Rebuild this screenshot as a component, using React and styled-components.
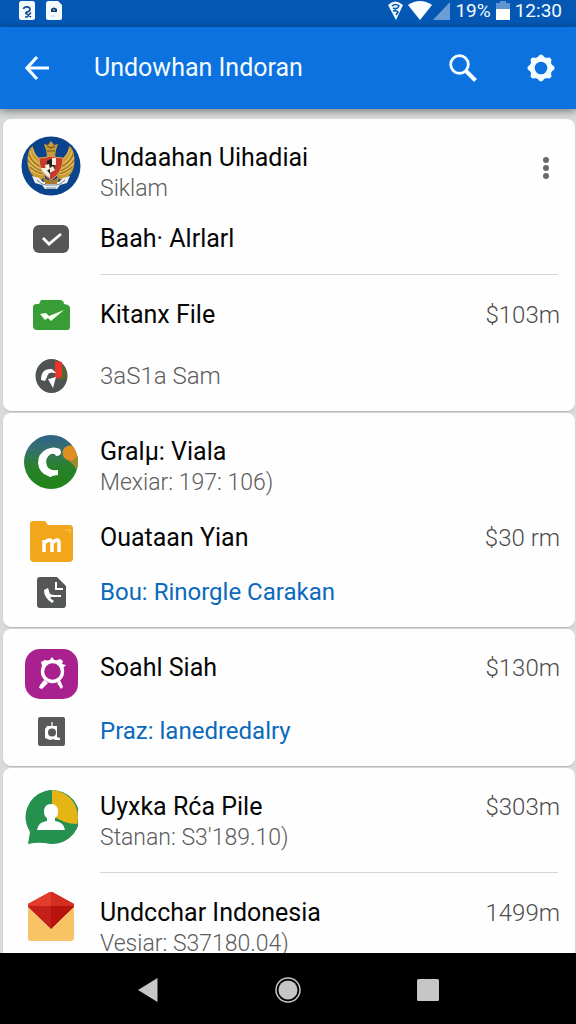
import React from "react";
import styled, { createGlobalStyle } from "styled-components";

const GlobalStyle = createGlobalStyle`
  * { box-sizing: border-box; }
  body {
    margin: 0;
    background: #d9dadb;
    font-family: Roboto, "Liberation Sans", sans-serif;
  }
  button { font: inherit; }
`;

const Screen = styled.div`
  display: flex;
  flex-direction: column;
  height: 100vh;
  overflow: hidden;
`;

const StatusBar = styled.div`
  flex: none;
  display: flex;
  align-items: flex-start;
  justify-content: space-between;
  height: 27px;
  padding: 1px 14px 0 19px;
  background: #0458b4;
  color: #f2fbff;
  font-size: 19px;
  line-height: 20px;
`;

const StatusGroup = styled.div`
  display: flex;
  align-items: flex-start;
  gap: ${(p) => p.$gap}px;
`;

const Toolbar = styled.header`
  flex: none;
  position: relative;
  display: flex;
  align-items: center;
  height: 82px;
  padding: 0 19px 0 21px;
  background: #0c72e0;
  color: #f4fcff;
  box-shadow: 0 2px 8px rgba(0, 0, 0, 0.45);
`;

const ToolbarTitle = styled.h1`
  flex: 1;
  margin: 0 0 0 41px;
  font-size: 25px;
  font-weight: 400;
  line-height: 32px;
  white-space: nowrap;
`;

const Actions = styled.div`
  display: flex;
  gap: 46px;
`;

const IconButton = styled.button`
  display: flex;
  align-items: center;
  justify-content: center;
  width: 32px;
  height: 32px;
  padding: 0;
  border: 0;
  background: none;
  color: inherit;
  cursor: pointer;
`;

const List = styled.main`
  flex: 1;
  min-height: 0;
  overflow-y: auto;
  scrollbar-width: none;
  display: flex;
  flex-direction: column;
  gap: 2px;
  padding: 10px 1px 0 3px;
`;

const Card = styled.section`
  flex: none;
  padding: 23px 15px 19px 17px;
  border-radius: 8px;
  background: #fefefe;
  box-shadow: 0 1px 1px rgba(0, 0, 0, 0.16);
`;

const Row = styled.div`
  display: flex;
  align-items: flex-start;
  margin-top: ${(p) => p.$gap || 0}px;
`;

const IconSlot = styled.div`
  flex: none;
  display: flex;
  align-items: center;
  justify-content: center;
  width: 62px;
  height: ${(p) => p.$height || 32}px;
  margin-right: 18px;
`;

const Copy = styled.div`
  flex: 1;
  min-width: 0;
  white-space: nowrap;
`;

const Title = styled.h2`
  margin: 0;
  color: #060606;
  font-size: 25px;
  font-weight: 400;
  line-height: 32px;
`;

const Detail = styled.p`
  margin: 0;
  color: #5c5c5c;
  font-size: ${(p) => (p.$large ? 24 : 23)}px;
  font-weight: 300;
  line-height: ${(p) => (p.$large ? 32 : 30)}px;
`;

const DetailLink = styled.a`
  display: block;
  color: #0a69bd;
  font-size: 24px;
  line-height: 32px;
  text-decoration: none;
`;

const Amount = styled.div`
  color: #4c4c4c;
  font-size: 24px;
  font-weight: 300;
  line-height: 32px;
  white-space: nowrap;
`;

const Menu = styled(IconButton)`
  margin: 10px -2px 0 0;
  color: #6a6a6a;
`;

const Divider = styled.hr`
  height: 1px;
  margin: 19px 2px 0 80px;
  border: 0;
  background: #d6d6d6;
`;

const NavBar = styled.nav`
  flex: none;
  display: grid;
  grid-template-columns: repeat(3, 1fr);
  place-items: center;
  height: 71px;
  padding: 2px 13.5% 0;
  background: #000;
  color: #c6c6c6;
`;

const Svg = ({ w, h, children }) => (
  <svg width={w} height={h} viewBox={`0 0 ${w} ${h}`} fill="none" aria-hidden="true">
    {children}
  </svg>
);

const SimIcon = () => (
  <Svg w={16} h={19}>
    <rect width="16" height="19" rx="2.5" fill="#f4fbff" />
    <path d="M4.500 8C5 5 11 5 11 8.500S6 10 7 12.500L12 16M12 11.500L8 16H6" stroke="#184f8c" strokeWidth="1.700" />
  </Svg>
);
const FileIcon = () => (
  <Svg w={16} h={19}>
    <path d="M2.500 0H12L16 4V17Q16 19 14 19H2Q0 19 0 17V3Q0 0 2.500 0Z" fill="#f4fbff" />
    <path d="M5 11V8Q8 5 11 8V11Z" fill="#123f78" />
    <path d="M7 9h2M5 15h4" stroke="#bcd4ee" />
  </Svg>
);
const LocationIcon = () => (
  <Svg w={15} h={19}>
    <path d="M0 4Q7 -3 15 4L8 19Z" fill="#f4fbff" />
    <path d="M4 5Q8 2 11 5Q9 9 5 7M5 10Q8 9 10 11L8 14" stroke="#0458b4" strokeWidth="1.600" />
  </Svg>
);
const WifiIcon = () => (
  <Svg w={24} h={19}><path d="M0 4Q12 -4 24 4L12 19Z" fill="#fbfeff" /></Svg>
);
const SignalIcon = () => (
  <Svg w={17} h={19}><path d="M17 1V19H0Z" fill="#6d9dd6" /></Svg>
);
const BatteryIcon = () => (
  <Svg w={14} h={19}>
    <path d="M4 0H10V2H14V9H0V2H4Z" fill="#5f94d0" />
    <path d="M0 8H14V19H0Z" fill="#fff" />
  </Svg>
);

const BackIcon = () => (
  <Svg w={26} h={26}>
    <path d="M13 2L3 13L13 24M3 13H25" stroke="currentColor" strokeWidth="3.200" />
  </Svg>
);
const SearchIcon = () => (
  <Svg w={28} h={28}>
    <circle cx="10.500" cy="10.500" r="8.800" stroke="currentColor" strokeWidth="2.800" />
    <path d="M17 17L26.500 26.500" stroke="currentColor" strokeWidth="4" />
  </Svg>
);
const GearIcon = () => (
  <Svg w={28} h={28}>
    <circle cx="14" cy="14" r="8.800" stroke="currentColor" strokeWidth="5" />
    {[0, 45, 90, 135, 180, 225, 270, 315].map((a) => (
      <path key={a} d="M10 4L12.400 0.900Q14 0 15.600 0.900L18 4Z" fill="currentColor" transform={`rotate(${a} 14 14)`} />
    ))}
  </Svg>
);
const DotsIcon = () => (
  <Svg w={8} h={24}>
    <circle cx="4" cy="4" r="3" fill="currentColor" />
    <circle cx="4" cy="12" r="3" fill="currentColor" />
    <circle cx="4" cy="20" r="3" fill="currentColor" />
  </Svg>
);

const Wing = () => (
  <>
    <path d="M19 44C9 41 5 31 7 19Q8 12 12 10Q12 17 16 21Q20 23 22 27L24 42Z" fill="#c99a35" />
    <path d="M9 15Q10 23 20 29M7 21Q10 28 20 33M7 27Q12 33 21 36M10 34Q15 38 22 39M12 13Q13 20 21 25" stroke="#e6bd58" strokeWidth="1.200" />
    <path d="M8 18Q10 26 20 31M7 24Q11 31 20 35M9 31Q14 36 21 38" stroke="#76602e" strokeWidth="0.800" />
  </>
);
const EmblemIcon = () => (
  <Svg w={60} h={60}>
    <circle cx="30" cy="30" r="29.500" fill="#0b438c" />
    <Wing />
    <g transform="matrix(-1 0 0 1 60 0)"><Wing /></g>
    <path d="M26 20L25 14L23 8L27 9L30 5L33 9L37 8L35 14L34 20L37 23H23Z" fill="#c79b38" />
    <path d="M26 10L30 12L34 10M26 15H34" stroke="#6d581f" strokeWidth="1.200" />
    <path d="M21 40Q30 49 39 40L36 49H24Z" fill="#ad7b27" />
    <path d="M18 22Q24 22 30 20Q36 22 42 22Q42 37 30 44Q18 37 18 22Z" fill="#c83b2c" stroke="#d6aa55" />
    <path d="M20 32H29V42Q22 38 20 32Z" fill="#f1eee2" />
    <path d="M26 25L30 23L33 25L34 33L29 38L25 33Z" fill="#241d1b" />
    <path d="M31 22H35V29H31ZM29 32L32 30L34 34L29 37ZM24 29L28 28L29 33L25 35Z" fill="#f8eee0" />
    <path d="M11 40L18 42L22 46L38 46L42 42L49 40L46 47L39 49L36 53H24L21 49L14 47Z" fill="#edf1ee" />
    <path d="M16 44L21 48L25 49H35L39 48L44 44M25 52H35" stroke="#6c8299" strokeWidth="1" />
    <path d="M24 42Q30 47 36 42L36 48H24Z" fill="#a9792b" />
  </Svg>
);
const CheckCardIcon = () => (
  <Svg w={36} h={28}>
    <rect width="36" height="28" rx="6" fill="#565656" />
    <path d="M10 13L16 19L28 9" stroke="#fff" strokeWidth="2.800" />
  </Svg>
);
const GreenFolderIcon = () => (
  <Svg w={37} h={30}>
    <path d="M8 0H28Q31 1 31 4L35 5Q37 6 37 8V27Q37 30 34 30H4Q0 30 0 26V7Q0 4 4 4H6Z" fill="#389d36" />
    <path d="M7 14L13 13L16 16L31 10L18 21L15 18L12 20Z" fill="#f5fff2" />
  </Svg>
);
const CompassIcon = () => (
  <Svg w={33} h={34}>
    <ellipse cx="16.500" cy="17" rx="16" ry="17" fill="#505354" />
    <path d="M28 6Q32 10 32 18L28 21H23Z" fill="#576432" />
    <path d="M20 2L27 3V18L20 20Z" fill="#ef3429" />
    <path d="M6 21Q6 9 17 10L21 14L14 14L10 22ZM13 20L21 18L18 29Z" fill="#fff" />
    <path d="M12 17L17 13L20 16L15 20" fill="#505354" />
  </Svg>
);
const CircleCIcon = () => (
  <Svg w={54} h={54}>
    <defs>
      <linearGradient id="hill" x1="0" y1="0" x2="0" y2="54" gradientUnits="userSpaceOnUse">
        <stop stopColor="#2c6488" /><stop offset="0.280" stopColor="#37706d" />
        <stop offset="0.550" stopColor="#2a8030" /><stop offset="1" stopColor="#208415" />
      </linearGradient>
      <clipPath id="disc"><circle cx="27" cy="27" r="27" /></clipPath>
    </defs>
    <g clipPath="url(#disc)">
      <rect width="54" height="54" fill="url(#hill)" />
      <path d="M43 24L54 20V36Q49 29 43 24Z" fill="#a08b2a" />
      <circle cx="46" cy="18" r="7.500" fill="#df8e20" />
    </g>
    <path d="M36 14Q30 11 23 14Q14 18 14 28Q15 38 24 41Q27 43 28 41L34 40V35Q25 36 23 31Q20 23 27 19Q31 18 32 21Q37 21 37 17Z" fill="#fff" />
  </Svg>
);
const YellowFolderIcon = () => (
  <Svg w={43} h={41}>
    <path d="M3 0H15L18 4H40Q43 4 43 8V37Q43 41 39 41H4Q0 41 0 37V3Q0 0 3 0Z" fill="#f1a61b" />
    <path d="M35 9H40V12" stroke="#f7bb45" strokeWidth="2" />
    <path d="M14 31V19M14 22Q21 16 22 22V31M22 22Q29 16 29 22V31" stroke="#fff" strokeWidth="3.500" />
  </Svg>
);
const DocumentIcon = () => (
  <Svg w={29} h={31}>
    <path d="M3 0H20L29 9V28Q29 31 26 31H3Q0 31 0 28V3Q0 0 3 0Z" fill="#555657" />
    <path d="M19 5V12H26M14 19H24" stroke="#fff" strokeWidth="2" />
    <path d="M7 13L11 11L13 17L17 18L13 21L17 24L15 26Q7 21 7 13Z" fill="#fff" />
  </Svg>
);
const CrestIcon = () => (
  <Svg w={53} h={50}>
    <rect width="53" height="50" rx="15" fill="#a9218f" />
    <circle cx="27.500" cy="22.500" r="10" stroke="#fff" strokeWidth="3.400" />
    <path d="M16 13L20 11L24 12L27 8L30 12L35 10L38 12L37 15L41 16L38 19L34 15Q28 11 21 16L18 20ZM19 31L23 34L17 40L14 39L15 36ZM32 34L35 31L38 38L36 40Z" fill="#fff" />
  </Svg>
);
const BoxAIcon = () => (
  <Svg w={27} h={29}>
    <rect width="27" height="29" rx="2" fill="#585a59" />
    <path d="M14 5V9" stroke="#e5e5e5" strokeWidth="1.500" />
    <path d="M9 9H19V20L22 21V23H17L16 22L12 23L7 21V12Z" fill="#fff" />
    <circle cx="14" cy="15.500" r="4" fill="#585a59" />
  </Svg>
);
const ContactIcon = () => (
  <Svg w={54} h={55}>
    <path d="M4 54L6 42A27 27 0 1 1 21 53Q13 52 4 54Z" fill="#26904f" />
    <path d="M28 0A27 27 0 0 1 53 34Q40 34 28 25Z" fill="#e5b516" />
    <path d="M27 14Q34 14 34 22Q34 26 31 28V31Q40 32 41 40H13Q14 32 23 31V28Q20 26 20 22Q20 14 27 14Z" fill="#fff" />
  </Svg>
);
const EnvelopeIcon = () => (
  <Svg w={46} h={49}>
    <path d="M0 13H46V46Q46 49 43 49H3Q0 49 0 46Z" fill="#f8c364" />
    <path d="M0 16L23 38L46 16V13H0Z" fill="#fbd994" />
    <path d="M0 12L20 1Q23 -1 26 1L46 12V15L23 37L0 15Z" fill="#c41f18" />
    <path d="M0 12L20 1Q22 0 23 0V14H0Z" fill="#e33b2d" />
    <path d="M23 0Q25 0 26 1L46 12V14H23Z" fill="#d42d22" />
    <path d="M23 14H46L23 37Z" fill="#b7130d" />
  </Svg>
);

function Entry({ gap, slot, icon, title, detail, note, link, amount, children }) {
  return (
    <Row $gap={gap}>
      <IconSlot $height={slot}>{icon}</IconSlot>
      <Copy>
        {title && <Title>{title}</Title>}
        {detail && <Detail>{detail}</Detail>}
        {note && <Detail $large>{note}</Detail>}
        {link && <DetailLink href="#">{link}</DetailLink>}
      </Copy>
      {amount && <Amount>{amount}</Amount>}
      {children}
    </Row>
  );
}

export default function App() {
  return (
    <Screen>
      <GlobalStyle />
      <StatusBar>
        <StatusGroup $gap={11}><SimIcon /><FileIcon /></StatusGroup>
        <StatusGroup $gap={5}>
          <LocationIcon />
          <StatusGroup $gap={1}><WifiIcon /><SignalIcon /></StatusGroup>
          <span>19%</span>
          <BatteryIcon />
          <time>12:30</time>
        </StatusGroup>
      </StatusBar>
      <Toolbar>
        <IconButton type="button" aria-label="Back"><BackIcon /></IconButton>
        <ToolbarTitle>Undowhan Indoran</ToolbarTitle>
        <Actions>
          <IconButton type="button" aria-label="Search"><SearchIcon /></IconButton>
          <IconButton type="button" aria-label="Settings"><GearIcon /></IconButton>
        </Actions>
      </Toolbar>
      <List>
        <Card>
          <Entry slot={48} icon={<EmblemIcon />} title="Undaahan Uihadiai" detail="Siklam">
            <Menu type="button" aria-label="More options"><DotsIcon /></Menu>
          </Entry>
          <Entry gap={19} icon={<CheckCardIcon />} title="Baah· Alrlarl" />
          <Divider />
          <Entry gap={24} icon={<GreenFolderIcon />} title="Kitanx File" amount="$103m" />
          <Entry gap={29} icon={<CompassIcon />} note="3aS1a Sam" />
        </Card>
        <Card>
          <Entry slot={52} icon={<CircleCIcon />} title="Gralµ: Viala" detail="Mexiar: 197: 106)" />
          <Entry gap={24} slot={38} icon={<YellowFolderIcon />} title="Ouataan Yian" amount="$30 rm" />
          <Entry gap={16} icon={<DocumentIcon />} link="Bou: Rinorgle Carakan" />
        </Card>
        <Card>
          <Entry slot={44} icon={<CrestIcon />} title="Soahl Siah" amount="$130m" />
          <Entry gap={19} icon={<BoxAIcon />} link="Praz: lanedredalry" />
        </Card>
        <Card>
          <Entry slot={52} icon={<ContactIcon />} title="Uyxka Rća Pile" detail="Stanan: S3'189.10)" amount="$303m" />
          <Divider />
          <Entry gap={24} slot={38} icon={<EnvelopeIcon />} title="Undcchar Indonesia" detail="Vesiar: S37180.04)" amount="1499m" />
        </Card>
      </List>
      <NavBar aria-label="System navigation">
        <IconButton type="button" aria-label="Back">
          <Svg w={20} h={24}><path d="M19.500 0V24L0 12Z" fill="currentColor" /></Svg>
        </IconButton>
        <IconButton type="button" aria-label="Home">
          <Svg w={26} h={26}>
            <circle cx="13" cy="13" r="12" stroke="currentColor" strokeWidth="1.500" />
            <circle cx="13" cy="13" r="9.500" fill="currentColor" />
          </Svg>
        </IconButton>
        <IconButton type="button" aria-label="Recent apps">
          <Svg w={22} h={22}><rect width="22" height="22" rx="1.500" fill="currentColor" /></Svg>
        </IconButton>
      </NavBar>
    </Screen>
  );
}
